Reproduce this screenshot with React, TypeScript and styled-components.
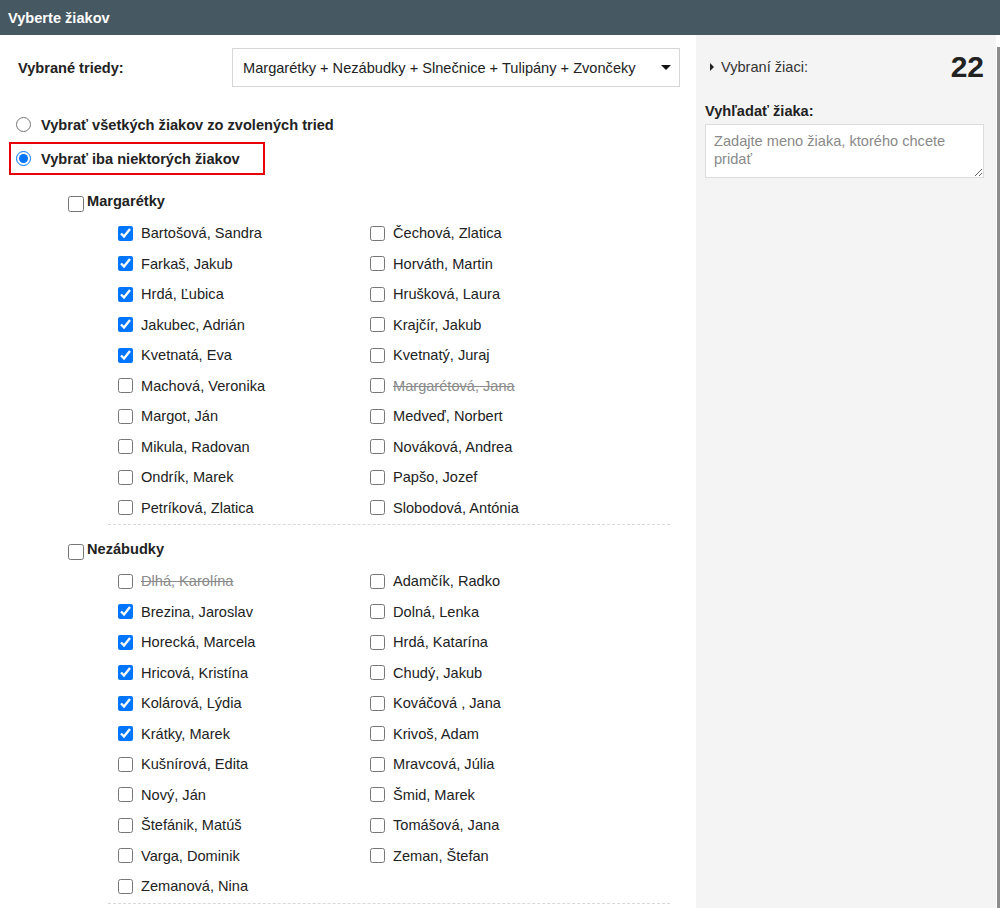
import styled, { createGlobalStyle } from "styled-components";

const GlobalStyle = createGlobalStyle`
  html, body {
    margin: 0;
    padding: 0;
    background: #ffffff;
  }
  body {
    font-family: "Liberation Sans", Arial, sans-serif;
    font-size: 14.6px;
    color: #222;
  }
`;

const Page = styled.div`
  width: 1000px;
  height: 908px;
  overflow: hidden;
  display: flex;
  flex-direction: column;
`;

const Header = styled.div`
  height: 35px;
  flex-shrink: 0;
  background: #465862;
  color: #fff;
  font-weight: bold;
  display: flex;
  align-items: center;
  padding-left: 8px;
`;

const Body = styled.div`
  flex: 1;
  display: flex;
  min-height: 0;
`;

const Main = styled.div`
  width: 696px;
  flex-shrink: 0;
  padding: 13px 16px 0 9px;
  box-sizing: border-box;
`;

const ClassRow = styled.div`
  display: flex;
  align-items: center;
  justify-content: space-between;
  padding-left: 9px;
`;

const Label = styled.span`
  font-weight: bold;
`;

const Select = styled.div`
  width: 448px;
  height: 39px;
  box-sizing: border-box;
  border: 1px solid #d6d6d6;
  display: flex;
  align-items: center;
  justify-content: space-between;
  padding: 0 8px 0 10px;
`;

const Caret = styled.span`
  width: 0;
  height: 0;
  border-left: 5px solid transparent;
  border-right: 5px solid transparent;
  border-top: 5px solid #111;
`;

const RadioList = styled.div`
  margin-top: 21px;
  display: flex;
  flex-direction: column;
  gap: 1px;
`;

const RadioRow = styled.label<{ $marked?: boolean }>`
  display: flex;
  align-items: center;
  gap: 10px;
  font-weight: bold;
  white-space: nowrap;
  width: ${(p) => (p.$marked ? "256px" : "auto")};
  height: 33px;
  box-sizing: border-box;
  padding-left: 5px;
  border: 2px solid ${(p) => (p.$marked ? "#e8000b" : "transparent")};

  input {
    width: 15px;
    height: 15px;
    margin: 0;
    accent-color: #0075ff;
  }
`;

const Group = styled.div<{ $first?: boolean }>`
  margin-left: 50px;
  margin-top: ${(p) => (p.$first ? "14px" : "0")};
`;

const GroupHead = styled.label`
  display: flex;
  align-items: flex-end;
  height: 20px;
  font-weight: bold;
  gap: 3px;
  margin-left: 9px;

  input {
    width: 16px;
    height: 16px;
    margin: 0 0 -3px 0;
  }
`;

const Students = styled.div`
  margin: 9px 0 12px 49px;
  width: 562px;
  padding: 0 0 1px 10px;
  box-sizing: border-box;
  display: grid;
  grid-template-columns: 252px 252px;
  grid-auto-rows: 30.5px;
  border-bottom: 1px dashed #d9d9d9;
`;

const Student = styled.label<{ $gone?: boolean }>`
  display: flex;
  align-items: center;
  gap: 8px;
  white-space: nowrap;
  color: ${(p) => (p.$gone ? "#8a8a8a" : "#222")};
  text-decoration: ${(p) => (p.$gone ? "line-through" : "none")};

  input {
    width: 15px;
    height: 15px;
    margin: 0;
    accent-color: #0075ff;
  }
`;

const Side = styled.div`
  flex: 1;
  background: #f4f4f4;
  padding: 15px 12px 0 9px;
`;

const SelectedRow = styled.div`
  display: flex;
  align-items: center;
  justify-content: space-between;
  padding-left: 5px;
`;

const Toggle = styled.span`
  display: flex;
  align-items: center;
  gap: 7px;
  color: #333;
`;

const Tri = styled.span`
  width: 0;
  height: 0;
  border-top: 4px solid transparent;
  border-bottom: 4px solid transparent;
  border-left: 4px solid #222;
`;

const Count = styled.span`
  font-size: 30px;
  font-weight: bold;
  color: #222;
`;

const SearchLabel = styled.div`
  font-weight: bold;
  margin-top: 19px;
  margin-bottom: 5px;
`;

const Search = styled.textarea`
  width: 100%;
  height: 54px;
  box-sizing: border-box;
  border: 1px solid #dcdcdc;
  padding: 7px 8px;
  font-family: "Liberation Sans", Arial, sans-serif;
  font-size: 14.6px;
  line-height: 18px;
  display: block;
  resize: vertical;

  &::placeholder {
    color: #8a8a8a;
  }
`;

const Scroll = styled.div`
  width: 4px;
  background: #fff;
  display: flex;
  flex-direction: column;
  align-items: flex-end;
  padding-top: 12px;
`;

const Thumb = styled.div`
  width: 3px;
  flex: 1;
  background: #8c8c8c;
`;

type S = { n: string; c?: boolean; g?: boolean };

const groups: { name: string; students: S[] }[] = [
  {
    name: "Margarétky",
    students: [
      { n: "Bartošová, Sandra", c: true },
      { n: "Čechová, Zlatica" },
      { n: "Farkaš, Jakub", c: true },
      { n: "Horváth, Martin" },
      { n: "Hrdá, Ľubica", c: true },
      { n: "Hrušková, Laura" },
      { n: "Jakubec, Adrián", c: true },
      { n: "Krajčír, Jakub" },
      { n: "Kvetnatá, Eva", c: true },
      { n: "Kvetnatý, Juraj" },
      { n: "Machová, Veronika" },
      { n: "Margarétová, Jana", g: true },
      { n: "Margot, Ján" },
      { n: "Medveď, Norbert" },
      { n: "Mikula, Radovan" },
      { n: "Nováková, Andrea" },
      { n: "Ondrík, Marek" },
      { n: "Papšo, Jozef" },
      { n: "Petríková, Zlatica" },
      { n: "Slobodová, Antónia" },
    ],
  },
  {
    name: "Nezábudky",
    students: [
      { n: "Dlhá, Karolína", g: true },
      { n: "Adamčík, Radko" },
      { n: "Brezina, Jaroslav", c: true },
      { n: "Dolná, Lenka" },
      { n: "Horecká, Marcela", c: true },
      { n: "Hrdá, Katarína" },
      { n: "Hricová, Kristína", c: true },
      { n: "Chudý, Jakub" },
      { n: "Kolárová, Lýdia", c: true },
      { n: "Kováčová , Jana" },
      { n: "Krátky, Marek", c: true },
      { n: "Krivoš, Adam" },
      { n: "Kušnírová, Edita" },
      { n: "Mravcová, Júlia" },
      { n: "Nový, Ján" },
      { n: "Šmid, Marek" },
      { n: "Štefánik, Matúš" },
      { n: "Tomášová, Jana" },
      { n: "Varga, Dominik" },
      { n: "Zeman, Štefan" },
      { n: "Zemanová, Nina" },
    ],
  },
];

export default function App() {
  return (
    <Page>
      <GlobalStyle />
      <Header>Vyberte žiakov</Header>
      <Body>
        <Main>
          <ClassRow>
            <Label>Vybrané triedy:</Label>
            <Select>
              <span>Margarétky + Nezábudky + Slnečnice + Tulipány + Zvončeky</span>
              <Caret />
            </Select>
          </ClassRow>
          <RadioList>
            <RadioRow>
              <input type="radio" name="mode" />
              Vybrať všetkých žiakov zo zvolených tried
            </RadioRow>
            <RadioRow $marked>
              <input type="radio" name="mode" defaultChecked />
              Vybrať iba niektorých žiakov
            </RadioRow>
          </RadioList>
          {groups.map((g, i) => (
            <Group key={g.name} $first={i === 0}>
              <GroupHead>
                <input type="checkbox" />
                {g.name}
              </GroupHead>
              <Students>
                {g.students.map((s) => (
                  <Student key={s.n} $gone={s.g}>
                    <input type="checkbox" defaultChecked={s.c} />
                    <span>{s.n}</span>
                  </Student>
                ))}
              </Students>
            </Group>
          ))}
        </Main>
        <Side>
          <SelectedRow>
            <Toggle>
              <Tri />
              Vybraní žiaci:
            </Toggle>
            <Count>22</Count>
          </SelectedRow>
          <SearchLabel>Vyhľadať žiaka:</SearchLabel>
          <Search placeholder="Zadajte meno žiaka, ktorého chcete pridať" />
        </Side>
        <Scroll>
          <Thumb />
        </Scroll>
      </Body>
    </Page>
  );
}
